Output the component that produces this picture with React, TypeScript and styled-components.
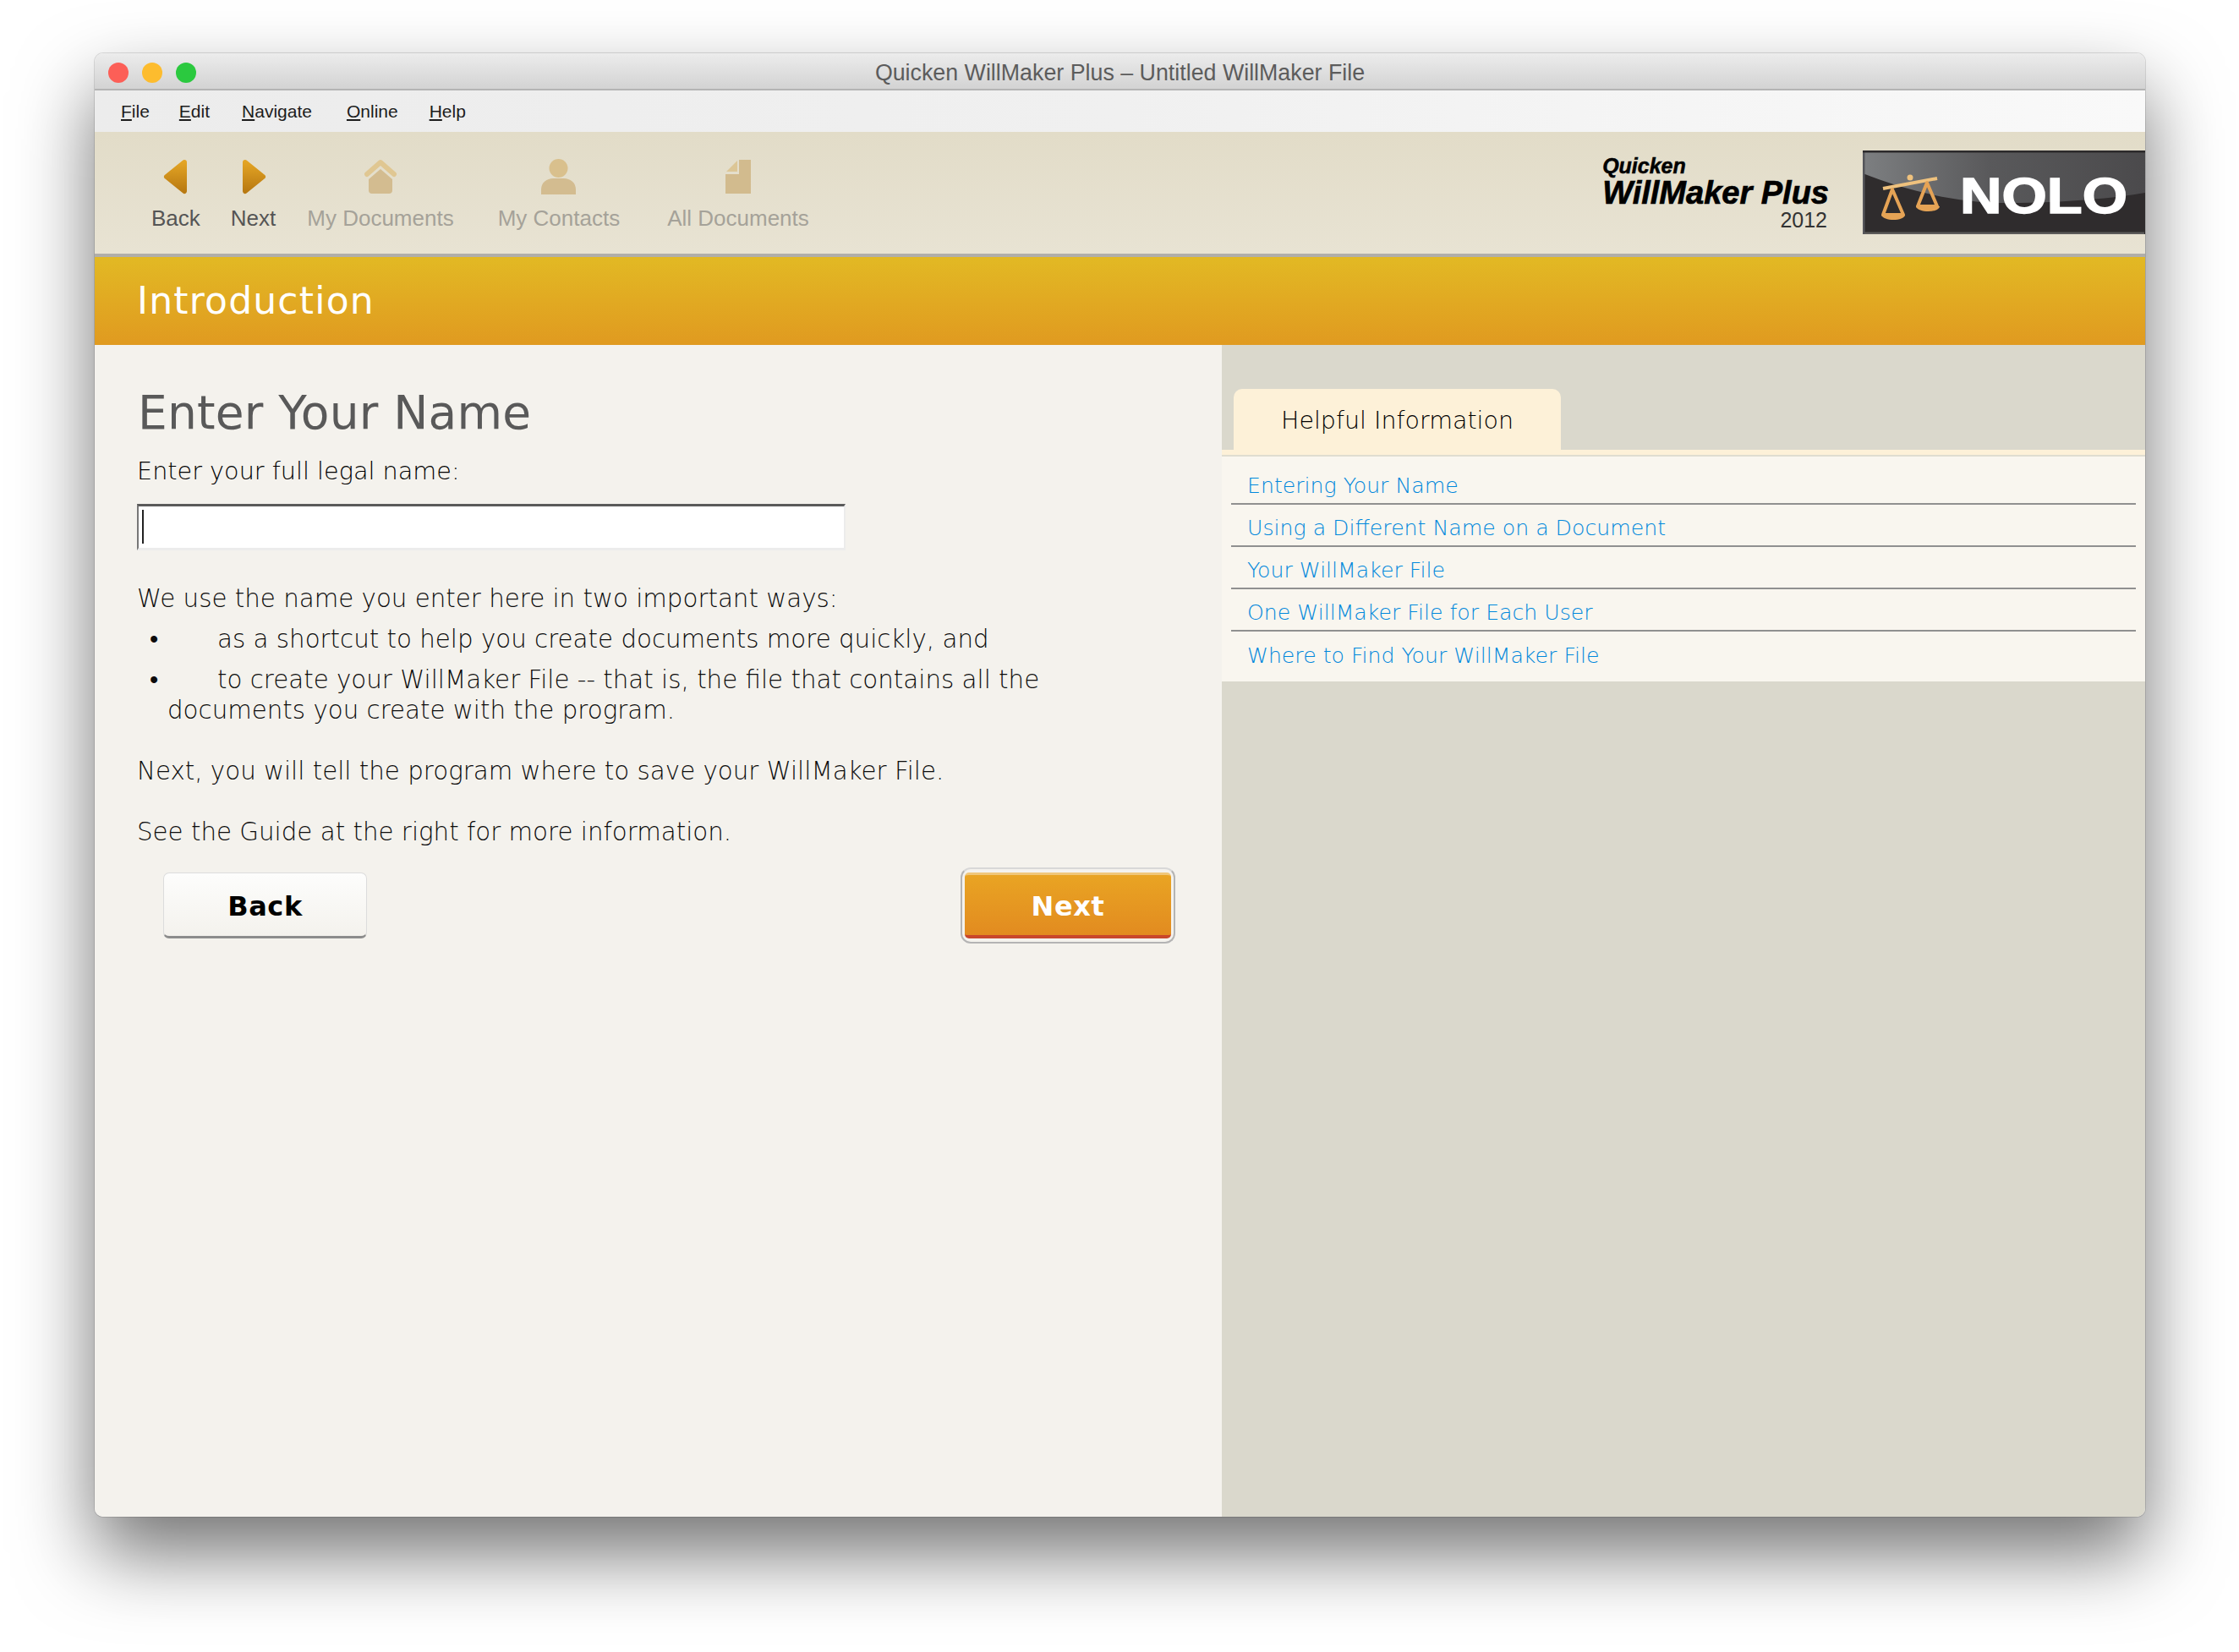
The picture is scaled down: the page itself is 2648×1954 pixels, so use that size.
import styled, { createGlobalStyle } from "styled-components"

const GlobalStyle = createGlobalStyle`
  html, body {
    margin: 0;
    background: #fff;
  }
  body {
    font-family: "DejaVu Sans", sans-serif;
  }
`

const ArrowIcon = ({ flip }: { flip?: boolean }) => (
  <svg width="30" height="42" viewBox="0 0 30 42">
    <defs>
      <linearGradient id="arrowFill" x1="0" y1="0" x2="0" y2="1">
        <stop offset="0" stopColor="#e3a424" />
        <stop offset="1" stopColor="#b97a12" />
      </linearGradient>
    </defs>
    <path
      d={flip ? "M5 4 L26 21 L5 38 Z" : "M25 4 L4 21 L25 38 Z"}
      fill="url(#arrowFill)"
      stroke="url(#arrowFill)"
      strokeWidth="6"
      strokeLinejoin="round"
    />
  </svg>
)

const HomeIcon = () => (
  <svg width="38" height="42" viewBox="0 0 38 42">
    <path d="M3 18 L19 4 L35 18" fill="none" stroke="#e0c792" strokeWidth="6" strokeLinejoin="round" strokeLinecap="round" />
    <path d="M19 12 L33 24 V37 a4 4 0 0 1 -4 4 H9 a4 4 0 0 1 -4 -4 V24 Z" fill="#d3bc90" />
  </svg>
)

const PersonIcon = () => (
  <svg width="41" height="42" viewBox="0 0 41 42">
    <ellipse cx="20.5" cy="11" rx="11" ry="11" fill="#d9c08d" />
    <path d="M0 42 V36 C0 28 7 23 14 23 H27 C34 23 41 28 41 36 V42 Z" fill="#d3bc90" />
  </svg>
)

const DocIcon = () => (
  <svg width="30" height="42" viewBox="0 0 30 42">
    <path d="M16 1 H30 V41 H0 V18 H16 Z" fill="#d2bb8e" />
    <path d="M14 2 V15 H1 Z" fill="#dcc696" />
  </svg>
)

const NoloMark = () => (
  <svg width="334" height="99" viewBox="0 0 334 99">
    <defs>
      <linearGradient id="gloss" x1="0" y1="0" x2="1" y2="0">
        <stop offset="0" stopColor="#7d7f81" />
        <stop offset="0.45" stopColor="#59595b" />
        <stop offset="1" stopColor="#4b4a4c" />
      </linearGradient>
    </defs>
    <rect width="334" height="99" fill="#2f2c2d" />
    <path d="M0 27 C50 47 110 62 170 62 C240 62 300 56 334 50 V0 H0 Z" fill="url(#gloss)" />
    <path d="M1 98 H333" stroke="#5b5a59" strokeWidth="3" />
    <path d="M1 0 V99" stroke="#55555a" strokeWidth="3" />
    <path d="M0 1 H334" stroke="#2c2a2b" strokeWidth="3" />
    <path d="M24 45 L88 33" stroke="#efc27e" strokeWidth="4" />
    <circle cx="56" cy="32" r="3.5" fill="#efc27e" />
    <path d="M35 46 L24 76 H48 Z" fill="none" stroke="#e5a355" strokeWidth="4" strokeLinejoin="round" />
    <path d="M76 38 L65 66 H88 Z" fill="none" stroke="#e5a355" strokeWidth="4" strokeLinejoin="round" />
    <path d="M22 76 H50 C49 84 24 84 22 76 Z" fill="#e5a355" />
    <path d="M63 66 H91 C90 74 65 74 63 66 Z" fill="#e5a355" />
    <text
      x="115"
      y="74"
      textLength="198"
      lengthAdjust="spacingAndGlyphs"
      fontFamily="'Liberation Sans', sans-serif"
      fontWeight="700"
      fontSize="60"
      fill="#fff"
      stroke="#fff"
      strokeWidth="1.5"
    >
      NOLO
    </text>
  </svg>
)

const menuItems = [
  { key: "F", rest: "ile", gap: 35 },
  { key: "E", rest: "dit", gap: 38 },
  { key: "N", rest: "avigate", gap: 41 },
  { key: "O", rest: "nline", gap: 37 },
  { key: "H", rest: "elp", gap: 0 },
]

const tools = [
  { label: "Back", icon: <ArrowIcon />, left: 18, right: 18, active: true },
  { label: "Next", icon: <ArrowIcon flip />, left: 18, right: 17, active: true },
  { label: "My Documents", icon: <HomeIcon />, left: 20, right: 23, active: false },
  { label: "My Contacts", icon: <PersonIcon />, left: 29, right: 28, active: false },
  { label: "All Documents", icon: <DocIcon />, left: 28, right: 28, active: false },
]

const links = [
  "Entering Your Name",
  "Using a Different Name on a Document",
  "Your WillMaker File",
  "One WillMaker File for Each User",
  "Where to Find Your WillMaker File",
]

export default function App() {
  return (
    <Page>
      <GlobalStyle />
      <Window>
        <TitleBar>
          <Lights>
            <Light $color="#fc5f57" />
            <Light $color="#fdbc2e" />
            <Light $color="#2bc93f" />
          </Lights>
          <WindowTitle>Quicken WillMaker Plus – Untitled WillMaker File</WindowTitle>
        </TitleBar>
        <MenuBar>
          {menuItems.map(m => (
            <MenuItem key={m.key} $gap={m.gap}>
              <u>{m.key}</u>
              {m.rest}
            </MenuItem>
          ))}
        </MenuBar>
        <Toolbar>
          <ToolGroup>
            {tools.map(t => (
              <ToolButton key={t.label} $left={t.left} $right={t.right}>
                <ToolIcon>{t.icon}</ToolIcon>
                <ToolLabel $active={t.active}>{t.label}</ToolLabel>
              </ToolButton>
            ))}
          </ToolGroup>
          <Brand>
            <BrandText>
              <BrandSmall>Quicken</BrandSmall>
              <BrandName>WillMaker Plus</BrandName>
              <BrandYear>2012</BrandYear>
            </BrandText>
            <NoloMark />
          </Brand>
        </Toolbar>
        <SectionBar>Introduction</SectionBar>
        <Content>
          <MainPanel>
            <Heading>Enter Your Name</Heading>
            <FieldLabel>Enter your full legal name:</FieldLabel>
            <NameField>
              <Caret />
            </NameField>
            <Para $top={39}>We use the name you enter here in two important ways:</Para>
            <BulletList>
              <Bullet>as a shortcut to help you create documents more quickly, and</Bullet>
              <Bullet>
                to create your WillMaker File -- that is, the file that contains all the
                <br />
                documents you create with the program.
              </Bullet>
            </BulletList>
            <Para $top={36}>Next, you will tell the program where to save your WillMaker File.</Para>
            <Para $top={36}>See the Guide at the right for more information.</Para>
            <ButtonRow>
              <BackButton>Back</BackButton>
              <NextRing>
                <NextButton>Next</NextButton>
              </NextRing>
            </ButtonRow>
          </MainPanel>
          <SidePanel>
            <Tab>Helpful Information</Tab>
            <TabStrip />
            <LinkList>
              {links.map(l => (
                <LinkRow key={l}>{l}</LinkRow>
              ))}
            </LinkList>
          </SidePanel>
        </Content>
      </Window>
    </Page>
  )
}

const Page = styled.div`
  width: 2648px;
  height: 1954px;
  padding: 63px 0 0 112px;
  box-sizing: border-box;
  overflow: hidden;
`

const Window = styled.div`
  width: 2425px;
  height: 1731px;
  display: flex;
  flex-direction: column;
  border-radius: 10px;
  overflow: hidden;
  box-shadow: 0 0 0 1px rgba(0, 0, 0, 0.12), 0 44px 90px rgba(0, 0, 0, 0.55);
`

const TitleBar = styled.div`
  height: 38px;
  flex: none;
  display: grid;
  grid-template-columns: 1fr auto 1fr;
  align-items: center;
  padding: 4px 16px 0;
  background: linear-gradient(#ececec, #d3d3d3);
  border-bottom: 2px solid #b4b4b4;
`

const Lights = styled.div`
  display: flex;
  gap: 16px;
`

const Light = styled.div<{ $color: string }>`
  width: 24px;
  height: 24px;
  border-radius: 50%;
  background: ${p => p.$color};
`

const WindowTitle = styled.div`
  font-family: "Liberation Sans", sans-serif;
  font-size: 26.8px;
  color: #5c5c5c;
`

const MenuBar = styled.div`
  height: 49px;
  flex: none;
  display: flex;
  align-items: center;
  padding-left: 31px;
  background: linear-gradient(90deg, #ececec, #f0f0f0 50%, #f9f9f9);
`

const MenuItem = styled.div<{ $gap: number }>`
  margin-right: ${p => p.$gap}px;
  font-family: "Liberation Sans", sans-serif;
  font-size: 21px;
  color: #1c1c1c;
`

const Toolbar = styled.div`
  height: 144px;
  flex: none;
  display: flex;
  justify-content: space-between;
  background: linear-gradient(#e2dcc8, #e8e3d3);
  border-bottom: 4px solid #b0aeaa;
`

const ToolGroup = styled.div`
  display: flex;
  padding: 32px 0 0 49px;
`

const ToolButton = styled.div<{ $left: number; $right: number }>`
  display: flex;
  flex-direction: column;
  align-items: center;
  padding: 0 ${p => p.$right}px 0 ${p => p.$left}px;
`

const ToolIcon = styled.div`
  height: 42px;
`

const ToolLabel = styled.div<{ $active: boolean }>`
  margin-top: 12px;
  font-family: "Liberation Sans", sans-serif;
  font-size: 26px;
  line-height: 32px;
  white-space: nowrap;
  color: ${p => (p.$active ? "#555555" : "#a5a299")};
`

const Brand = styled.div`
  display: flex;
  align-items: flex-start;
  gap: 40px;
  padding-top: 22px;
`

const BrandText = styled.div`
  display: flex;
  flex-direction: column;
  padding-top: 5px;
  font-family: "Liberation Sans", sans-serif;
`

const BrandSmall = styled.div`
  font-size: 25px;
  line-height: 27px;
  font-weight: 700;
  font-style: italic;
  -webkit-text-stroke: 0.5px #000;
  color: #000;
`

const BrandName = styled.div`
  font-size: 38px;
  line-height: 36px;
  font-weight: 700;
  font-style: italic;
  white-space: nowrap;
  -webkit-text-stroke: 0.7px #000;
  color: #000;
`

const BrandYear = styled.div`
  font-size: 25px;
  line-height: 28px;
  text-align: right;
  padding-right: 2px;
  color: #333;
`

const SectionBar = styled.div`
  height: 102px;
  flex: none;
  display: flex;
  align-items: center;
  padding: 0 0 2px 50px;
  font-size: 44px;
  letter-spacing: 1.2px;
  color: #fff;
  background: linear-gradient(#e2b924, #e09a20);
`

const Content = styled.div`
  flex: 1;
  display: grid;
  grid-template-columns: 1333px 1fr;
  min-height: 0;
`

const MainPanel = styled.div`
  background: #f4f2ed;
  padding: 50px 55px 0 50px;
  font-size: 29.3px;
  font-weight: 200;
  line-height: 36px;
  color: #0c0c0c;
`

const Heading = styled.h1`
  margin: 0 0 0 1px;
  font-size: 55px;
  line-height: 60px;
  font-weight: 400;
  letter-spacing: 0.2px;
  color: #595959;
`

const FieldLabel = styled.div`
  margin-top: 21px;
  font-size: 28.7px;
  color: #000;
`

const NameField = styled.div`
  margin-top: 21px;
  width: 838px;
  height: 55px;
  box-sizing: border-box;
  padding: 4px 0 0 4px;
  background: #fff;
  border-top: 3px solid #5a5a5a;
  border-left: 2px solid #777;
  border-right: 2px solid #ececec;
  border-bottom: 3px solid #ececec;
`

const Caret = styled.div`
  width: 2px;
  height: 40px;
  background: #222;
`

const Para = styled.p<{ $top: number }>`
  margin: ${p => p.$top}px 0 0;
`

const BulletList = styled.ul`
  list-style: none;
  margin: 12px 0 0;
  padding: 0;
`

const Bullet = styled.li`
  position: relative;
  margin-bottom: 12px;
  padding-left: 36px;
  text-indent: 59px;

  &:last-child {
    margin-bottom: 0;
  }

  &::before {
    content: "•";
    position: absolute;
    left: 15px;
    text-indent: 0;
  }
`

const ButtonRow = styled.div`
  margin-top: 24px;
  padding-left: 31px;
  display: flex;
  justify-content: space-between;
  align-items: center;
`

const BackButton = styled.div`
  width: 241px;
  height: 78px;
  box-sizing: border-box;
  display: flex;
  align-items: center;
  justify-content: center;
  padding-top: 3px;
  font-size: 32px;
  font-weight: 700;
  letter-spacing: 0.6px;
  color: #000;
  background: linear-gradient(#fdfdfc, #f4f2ed);
  border: 1px solid #dcdcdc;
  border-bottom: 3px solid #8c8c8c;
  border-radius: 7px;
`

const NextRing = styled.div`
  padding: 4px 3px;
  border: 2px solid #b4b4b4;
  border-top-color: #d8d8d8;
  border-radius: 12px;
`

const NextButton = styled.div`
  width: 244px;
  height: 78px;
  box-sizing: border-box;
  display: flex;
  align-items: center;
  justify-content: center;
  padding-top: 3px;
  font-size: 32px;
  font-weight: 700;
  letter-spacing: 0.6px;
  color: #fff;
  background: linear-gradient(#e9a423, #e28b20);
  border-top: 3px solid #f0c77a;
  border-bottom: 4px solid #c9472c;
  border-radius: 5px;
`

const SidePanel = styled.div`
  background: #dad8cc;
  padding-top: 52px;
`

const Tab = styled.div`
  width: 387px;
  height: 72px;
  box-sizing: border-box;
  margin-left: 14px;
  padding-top: 2px;
  display: flex;
  align-items: center;
  justify-content: center;
  font-size: 28.5px;
  font-weight: 200;
  color: #000;
  background: #fdf1d8;
  border-radius: 10px 10px 0 0;
`

const TabStrip = styled.div`
  height: 6px;
  background: #fdf1d8;
  border-bottom: 2px solid #dfddd0;
`

const LinkList = styled.div`
  height: 266px;
  box-sizing: border-box;
  padding: 7px 11px 0 11px;
  background: #f9f6ef;
`

const LinkRow = styled.div`
  height: 50px;
  box-sizing: border-box;
  display: flex;
  align-items: center;
  padding: 6px 0 0 19px;
  font-size: 25.2px;
  font-weight: 200;
  color: #0088dc;
  border-bottom: 2px solid #909090;

  &:last-child {
    border-bottom: none;
  }
`
